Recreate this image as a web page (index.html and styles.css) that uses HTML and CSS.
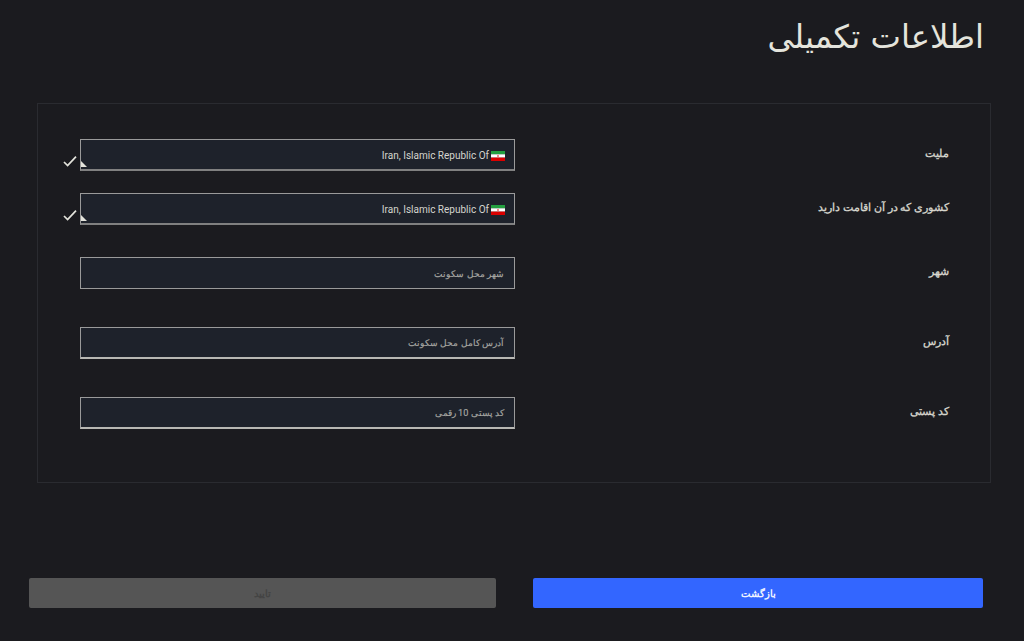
FILE: index.html
```html
<!DOCTYPE html>
<html lang="fa" dir="rtl">
<head>
<meta charset="utf-8">
<title>اطلاعات تکمیلی</title>
<link rel="stylesheet" href="styles.css">
</head>
<body>
<main class="page">
  <h1 class="title">اطلاعات تکمیلی</h1>
  <form class="card">
    <div class="row row-select-first">
      <label class="label">ملیت</label>
      <div class="field field-select">
        <span class="select-value"><svg class="flag" viewBox="0 0 14 10"><rect width="14" height="3.4" fill="#239f40"/><rect y="3.3" width="14" height="3.4" fill="#fff"/><rect y="6.6" width="14" height="3.4" fill="#da0000"/><circle cx="7" cy="5" r="0.8" fill="#da0000"/></svg><span dir="ltr">Iran, Islamic Republic Of</span></span>
        <span class="corner"></span>
        <svg class="check" viewBox="0 0 14 12"><path d="M1 7l3.6 3.6L13 1.6" fill="none" stroke="#e4e4dc" stroke-width="1.7"/></svg>
      </div>
    </div>
    <div class="row row-select-second">
      <label class="label">کشوری که در آن اقامت دارید</label>
      <div class="field field-select">
        <span class="select-value"><svg class="flag" viewBox="0 0 14 10"><rect width="14" height="3.4" fill="#239f40"/><rect y="3.3" width="14" height="3.4" fill="#fff"/><rect y="6.6" width="14" height="3.4" fill="#da0000"/><circle cx="7" cy="5" r="0.8" fill="#da0000"/></svg><span dir="ltr">Iran, Islamic Republic Of</span></span>
        <span class="corner"></span>
        <svg class="check" viewBox="0 0 14 12"><path d="M1 7l3.6 3.6L13 1.6" fill="none" stroke="#e4e4dc" stroke-width="1.7"/></svg>
      </div>
    </div>
    <div class="row row-input">
      <label class="label">شهر</label>
      <div class="field"><span class="placeholder">شهر محل سکونت</span></div>
    </div>
    <div class="row row-input">
      <label class="label">آدرس</label>
      <div class="field field-thick"><span class="placeholder">آدرس کامل محل سکونت</span></div>
    </div>
    <div class="row">
      <label class="label">کد پستی</label>
      <div class="field field-thick"><span class="placeholder">کد پستی 10 رقمی</span></div>
    </div>
  </form>
  <div class="actions">
    <button type="button" class="btn btn-primary">بازگشت</button>
    <button type="button" class="btn btn-disabled">تایید</button>
  </div>
</main>
</body>
</html>
```
FILE: styles.css
```css
* { box-sizing: border-box; }
html, body { margin: 0; height: 100%; overflow: hidden; }
body {
  background: #1b1b1f;
  color: #e4e4dc;
  font-family: Roboto, sans-serif;
}
.page {
  height: 641px;
  padding: 0 41px 0 28px;
  display: flex;
  flex-direction: column;
}
.title {
  margin: 0 -1px 0 0;
  height: 103px;
  padding-top: 15px;
  font-size: 32.3px;
  line-height: 44px;
  font-weight: 400;
  font-family: "DejaVu Sans", sans-serif;
  color: #e4e4dc;
}
.card {
  width: 954px;
  height: 380px;
  margin-right: -8px;
  border: 1px solid #2a2b30;
  padding: 35px 41px 0 42px;
}
.row {
  display: flex;
  justify-content: space-between;
  align-items: center;
}
.row-select-first { margin-bottom: 22px; }
.row-select-second { margin-bottom: 32px; }
.row-input { margin-bottom: 38px; }
.label {
  font-family: Roboto, sans-serif;
  font-size: 11px;
  font-weight: 400;
  -webkit-text-stroke: 0.3px #d8d8cf;
  color: #d8d8cf;
  position: relative;
  top: -2px;
}
.field {
  position: relative;
  width: 435px;
  height: 32px;
  background: #1e222b;
  border: 1px solid #9a9a9a;
  display: flex;
  align-items: center;
  padding: 0 9px;
}
.field-select { border-bottom-width: 2px; border-bottom-color: #808080; padding-top: 2px; }
.field-thick { border-bottom: 2px solid #b8b8b4; }
.select-value {
  display: flex;
  align-items: center;
  gap: 2px;
  font-size: 10px;
  color: #d5d5ce;
}
.flag { width: 14px; height: 10px; }
.placeholder {
  font-family: Roboto, sans-serif;
  font-size: 9.2px;
  -webkit-text-stroke: 0.15px #a8a8a4;
  color: #a8a8a4;
  padding-right: 1px;
}
.corner {
  position: absolute;
  left: 0;
  bottom: 2px;
  width: 0;
  height: 0;
  border-style: solid;
  border-width: 0 6px 6px 0;
  border-color: transparent transparent #e4e4dc transparent;
}
.check {
  position: absolute;
  left: -18px;
  bottom: 2px;
  width: 14px;
  height: 12px;
}
.actions {
  display: flex;
  justify-content: space-between;
  margin-top: 95px;
  margin-left: 1px;
}
.btn {
  height: 30px;
  border: 0;
  border-radius: 2px;
  font-family: Roboto, sans-serif;
  font-size: 9.5px;
  font-weight: 700;
}
.btn-primary { width: 450px; background: #3366ff; color: #f0f4ff; }
.btn-disabled { width: 467px; background: #555555; color: #444444; }
```
